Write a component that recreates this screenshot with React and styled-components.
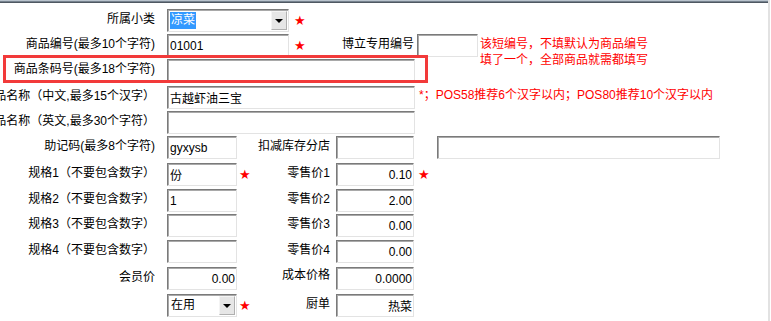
import React from "react";
import styled, { createGlobalStyle } from "styled-components";

const GlobalStyle = createGlobalStyle`
  html, body {
    margin: 0;
    padding: 0;
    background: #fff;
    overflow: hidden;
  }
  body {
    font-family: "Liberation Sans", "Noto Sans CJK SC", sans-serif;
    font-size: 12px;
    color: #000;
  }
`;

export default function App() {
  return (
    <>
      <GlobalStyle />
      <Window>
        <TopBar />
        <Form>
          <Row h={25}>
            <Label>所属小类</Label>
            <Select w={122}>
              <SelText selected>凉菜</SelText>
              <DropBtn><Arrow /></DropBtn>
            </Select>
            <StarSlot w={20}><Star ml={5}>★</Star></StarSlot>
          </Row>

          <Row h={25}>
            <Label>商品编号(最多10个字符)</Label>
            <Field w={122} readOnly value="01001" />
            <StarSlot w={53}><Star ml={5}>★</Star></StarSlot>
            <InlineLabel>博立专用编号</InlineLabel>
            <Field w={61} readOnly value="" />
            <Note ml={2} lines>
              该短编号，不填默认为商品编号
              <br />
              填了一个，全部商品就需都填写
            </Note>
          </Row>

          <Row h={27} highlight>
            <Label>商品条码号(最多18个字符)</Label>
            <Field w={248} readOnly value="" />
          </Row>

          <Row h={25}>
            <Label>商品名称（中文,最多15个汉字）</Label>
            <Field w={248} readOnly value="古越虾油三宝" />
            <Note ml={4}>*；POS58推荐6个汉字以内；POS80推荐10个汉字以内</Note>
          </Row>

          <Row h={25}>
            <Label>商品名称（英文,最多30个字符）</Label>
            <Field w={248} readOnly value="" />
          </Row>

          <Row h={27}>
            <Label>助记码(最多8个字符)</Label>
            <Field w={70} readOnly value="gyxysb" />
            <StarSlot w={18} />
            <MidLabel>扣减库存分店</MidLabel>
            <Field w={78} readOnly value="" />
            <Spacer w={23} />
            <Field w={283} readOnly value="" />
          </Row>

          <Row h={26}>
            <Label>规格1（不要包含数字）</Label>
            <Field w={70} readOnly value="份" />
            <StarSlot w={18}><Star ml={2}>★</Star></StarSlot>
            <MidLabel>零售价1</MidLabel>
            <Field w={78} right readOnly value="0.10" />
            <Star ml={4}>★</Star>
          </Row>

          <Row h={25}>
            <Label>规格2（不要包含数字）</Label>
            <Field w={70} readOnly value="1" />
            <StarSlot w={18} />
            <MidLabel>零售价2</MidLabel>
            <Field w={78} right readOnly value="2.00" />
          </Row>

          <Row h={26}>
            <Label>规格3（不要包含数字）</Label>
            <Field w={70} readOnly value="" />
            <StarSlot w={18} />
            <MidLabel>零售价3</MidLabel>
            <Field w={78} right readOnly value="0.00" />
          </Row>

          <Row h={27}>
            <Label>规格4（不要包含数字）</Label>
            <Field w={70} readOnly value="" />
            <StarSlot w={18} />
            <MidLabel>零售价4</MidLabel>
            <Field w={78} right readOnly value="0.00" />
          </Row>

          <Row h={27}>
            <Label>会员价</Label>
            <Field w={70} right readOnly value="0.00" />
            <StarSlot w={18} />
            <MidLabel up>成本价格</MidLabel>
            <Field w={78} right readOnly value="0.0000" />
          </Row>

          <Row h={25}>
            <Label />
            <Select w={70}>
              <SelText>在用</SelText>
              <DropBtn><Arrow /></DropBtn>
            </Select>
            <StarSlot w={18}><Star ml={2}>★</Star></StarSlot>
            <MidLabel>厨单</MidLabel>
            <Field w={78} right readOnly value="热菜" />
          </Row>
        </Form>
      </Window>
    </>
  );
}

const Window = styled.div`
  width: 770px;
  height: 321px;
  border-right: 2px solid #e2e2e2;
  box-sizing: border-box;
  overflow: hidden;
`;

const TopBar = styled.div`
  height: 3px;
  background: linear-gradient(#b9c3cd 0 1px, #76828e 1px 2px, #4f5862 2px 3px);
`;

const Form = styled.div`
  padding-top: 6px;
`;

const Row = styled.div`
  position: relative;
  display: flex;
  align-items: flex-start;
  height: ${(p) => p.h}px;

  ${(p) =>
    p.highlight &&
    `
    &::after {
      content: "";
      position: absolute;
      top: -4px;
      left: 3px;
      width: 425px;
      height: 28px;
      border: 3px solid #f23a3a;
      box-sizing: border-box;
      pointer-events: none;
    }
  `}
`;

const Label = styled.div`
  flex: none;
  width: 155px;
  margin-right: 12px;
  display: flex;
  justify-content: flex-end;
  white-space: nowrap;
  line-height: 21px;
`;

const MidLabel = styled.div`
  flex: none;
  width: 75px;
  margin-right: 6px;
  text-align: right;
  white-space: nowrap;
  line-height: ${(p) => (p.up ? "16px" : "21px")};
`;

const InlineLabel = styled.div`
  flex: none;
  width: 72px;
  margin-right: 3px;
  white-space: nowrap;
  text-align: right;
  line-height: 21px;
`;

const Field = styled.input`
  flex: none;
  width: ${(p) => p.w}px;
  height: 23px;
  box-sizing: border-box;
  margin: 0;
  padding: 0 1px 0 2px;
  border-top: 1px solid #7a7a7a;
  border-left: 1px solid #7a7a7a;
  border-right: 1px solid #e3e3e3;
  border-bottom: 1px solid #e3e3e3;
  box-shadow: inset 1px 1px 0 #a9a9a9;
  background: #fff;
  font: inherit;
  color: #000;
  text-align: ${(p) => (p.right ? "right" : "left")};
  outline: none;
`;

const Select = styled.div`
  flex: none;
  width: ${(p) => p.w}px;
  height: 23px;
  box-sizing: border-box;
  display: flex;
  align-items: center;
  justify-content: space-between;
  padding: 1px 1px 1px 2px;
  border-top: 1px solid #7a7a7a;
  border-left: 1px solid #7a7a7a;
  border-right: 1px solid #e3e3e3;
  border-bottom: 1px solid #e3e3e3;
  box-shadow: inset 1px 1px 0 #a9a9a9;
  background: #fff;
`;

const SelText = styled.span`
  line-height: 17px;
  padding: 0 1px;
  background: ${(p) => (p.selected ? "#3399ff" : "transparent")};
  color: ${(p) => (p.selected ? "#fff" : "#000")};
`;

const DropBtn = styled.div`
  width: 16px;
  height: 19px;
  box-sizing: border-box;
  background: #e6e6e6;
  border-left: 1px solid #f4f4f4;
  border-top: 1px solid #f4f4f4;
  border-right: 1px solid #b0b0b0;
  border-bottom: 1px solid #b0b0b0;
  display: flex;
  align-items: center;
  justify-content: center;
`;

const Arrow = styled.span`
  width: 0;
  height: 0;
  border-left: 4px solid transparent;
  border-right: 4px solid transparent;
  border-top: 4px solid #000;
`;

const Star = styled.span`
  flex: none;
  margin-left: ${(p) => p.ml}px;
  color: #ff0000;
  font-family: "DejaVu Sans", sans-serif;
  font-size: 13px;
  line-height: 24px;
`;

const StarSlot = styled.div`
  flex: none;
  width: ${(p) => p.w}px;
  display: flex;
`;

const Spacer = styled.div`
  flex: none;
  width: ${(p) => p.w}px;
`;

const Note = styled.div`
  flex: none;
  margin-left: ${(p) => p.ml}px;
  margin-top: ${(p) => (p.lines ? "2px" : "0")};
  color: #ff0000;
  white-space: nowrap;
  line-height: ${(p) => (p.lines ? "16px" : "19px")};
`;
